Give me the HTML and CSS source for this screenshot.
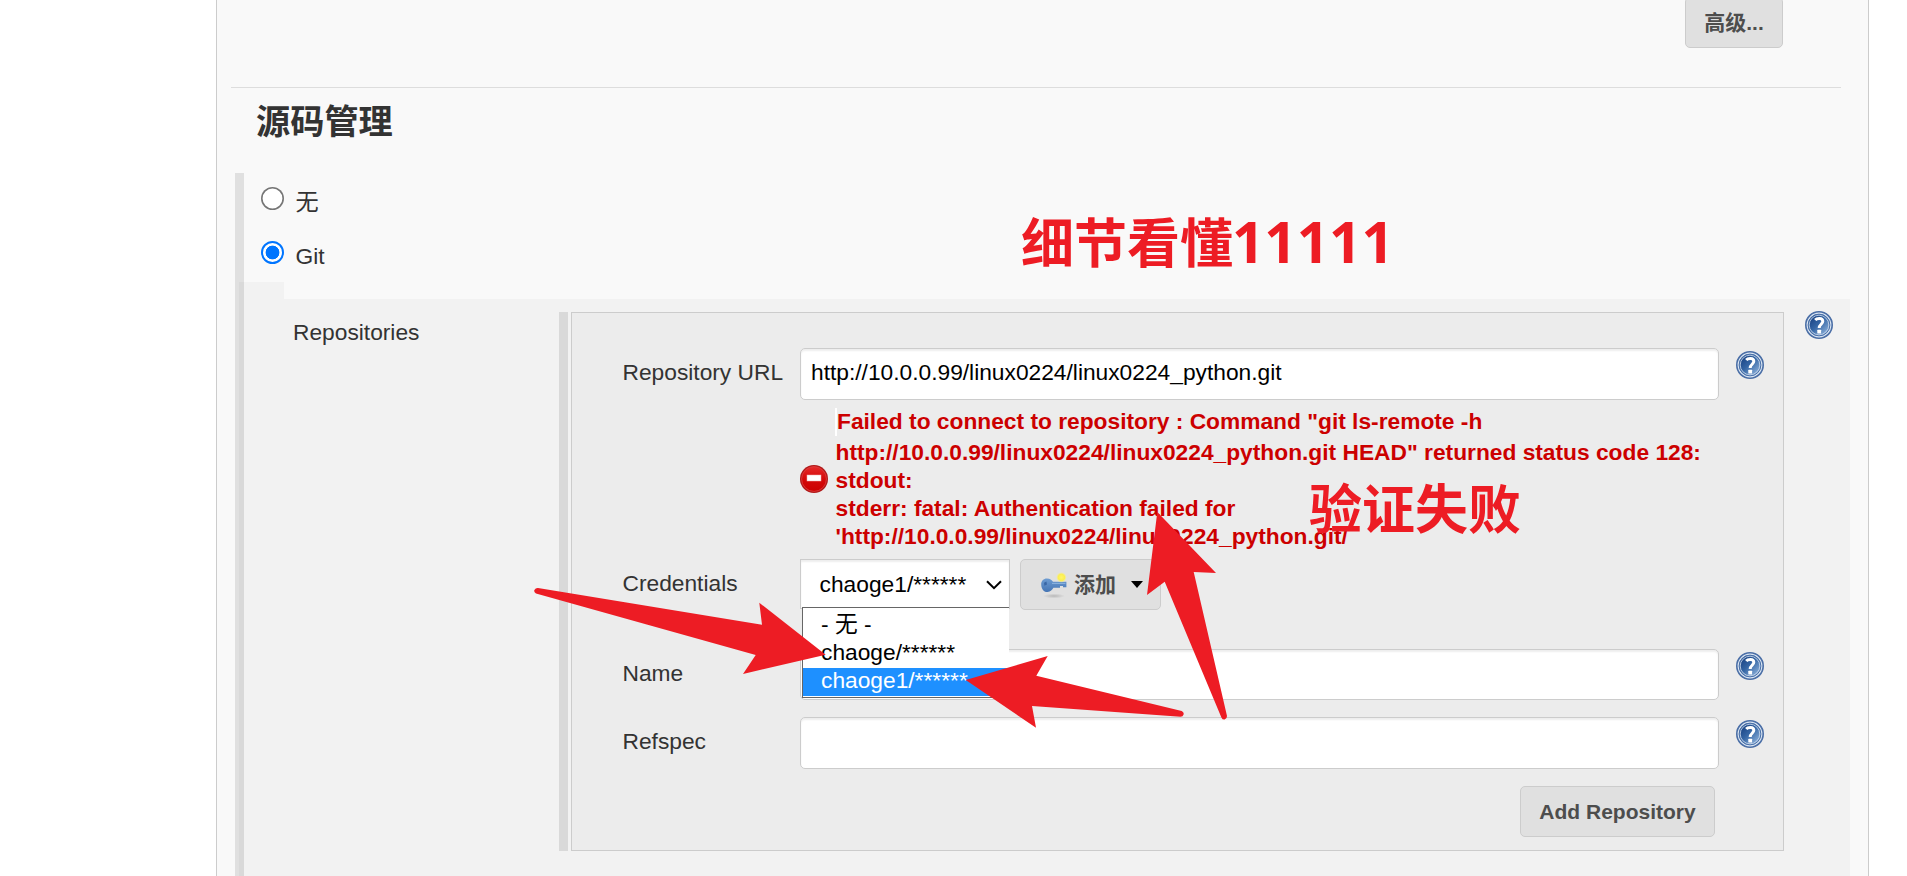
FILE: index.html
```html
<!DOCTYPE html>
<html lang="zh-CN">
<head>
<meta charset="utf-8">
<title>源码管理</title>
<link rel="stylesheet" href="styles.css">
</head>
<body>
<svg class="defs" width="0" height="0" aria-hidden="true">
  <defs>
    <linearGradient id="blue" x1="0.1" y1="0.1" x2="0.9" y2="0.9">
      <stop offset="0" stop-color="#163f80"/>
      <stop offset="0.45" stop-color="#3465a4"/>
      <stop offset="1" stop-color="#8fb3dc"/>
    </linearGradient>
    <linearGradient id="red" x1="0" y1="0" x2="0" y2="1">
      <stop offset="0" stop-color="#e62a2a"/>
      <stop offset="0.5" stop-color="#d40a0a"/>
      <stop offset="1" stop-color="#cc0000"/>
    </linearGradient>
    <radialGradient id="spark">
      <stop offset="0" stop-color="#fff56a"/>
      <stop offset="0.6" stop-color="#fbee50"/>
      <stop offset="1" stop-color="#fbf08a" stop-opacity="0"/>
    </radialGradient>
    <linearGradient id="steel" x1="0" y1="0" x2="0" y2="1">
      <stop offset="0" stop-color="#6d9cd2"/>
      <stop offset="1" stop-color="#4575b4"/>
    </linearGradient>
    <radialGradient id="ground">
      <stop offset="0" stop-color="#b8b8b8"/>
      <stop offset="1" stop-color="#e0e0e0"/>
    </radialGradient>
    <symbol id="help" viewBox="0 0 28 28">
      <circle cx="14" cy="14" r="13.2" fill="#dbe6f3" stroke="#4a6ea6" stroke-width="1.6"/>
      <circle cx="14" cy="14" r="10.9" fill="url(#blue)" stroke="#4a70a8" stroke-width="1"/>
      <circle cx="14" cy="14" r="9.8" fill="none" stroke="#c3d3e8" stroke-width="0.9"/>
      <path d="M10.2 8.9C11.6 7.3 17.8 6.2 17.8 10.3C17.8 13.2 14.2 13.4 14.2 17" fill="none" stroke="#fff" stroke-width="3"/>
      <rect x="12.3" y="18.8" width="3.8" height="3.6" rx="0.5" fill="#fff"/>
    </symbol>
  </defs>
</svg>

<main class="panel">
  <div class="advanced"><button class="btn btn-advanced"><span class="btn-cjk">高级...</span></button></div>
  <hr class="rule">
  <h2 class="heading">源码管理</h2>

  <section class="scm">
    <div class="bar"></div>
    <div class="scm-body">
      <label class="choice"><span class="radio"></span><span class="choice-none">无</span></label>
      <label class="choice"><span class="radio radio-on"></span><span>Git</span></label>
      <div class="shade-step"></div>
      <div class="git">
        <div class="repo-label">Repositories</div>
        <div class="bar bar-inner"></div>
        <div class="repo">
          <div class="row row-url">
            <span class="label">Repository URL</span>
            <div class="input">http://10.0.0.99/linux0224/linux0224_python.git</div>
            <svg class="help"><use href="#help"/></svg>
          </div>
          <div class="error">
            <svg class="error-icon" viewBox="0 0 28 28">
              <circle cx="14" cy="14" r="14" fill="#b01818"/>
              <circle cx="14" cy="14" r="12.4" fill="url(#red)" stroke="#e04040" stroke-width="0.8"/>
              <rect x="7" y="10" width="14" height="6" fill="#fff" stroke="#f2b0b0" stroke-width="0.5"/>
            </svg>
            <div class="error-text">
              <div class="error-first">Failed to connect to repository : Command "git ls-remote -h</div>
              <div>http://10.0.0.99/linux0224/linux0224_python.git HEAD" returned status code 128:</div>
              <div>stdout:</div>
              <div>stderr: fatal: Authentication failed for</div>
              <div>'http://10.0.0.99/linux0224/linux0224_python.git/</div>
            </div>
          </div>
          <div class="row row-cred">
            <span class="label">Credentials</span>
            <div class="cred">
              <div class="select">
                <span>chaoge1/******</span>
                <svg class="chevron" viewBox="0 0 16 10"><path d="M1 1.2L8 8.2L15 1.2" fill="none" stroke="#000" stroke-width="2"/></svg>
                <ul class="options">
                  <li class="opt opt-none">- 无 -</li>
                  <li class="opt">chaoge/******</li>
                  <li class="opt opt-on">chaoge1/******</li>
                </ul>
              </div>
              <button class="btn btn-add">
                <svg class="key" viewBox="0 0 28 28">
                  <ellipse cx="14" cy="25" rx="11" ry="2.4" fill="url(#ground)"/>
                  <path d="M1.2 13.2C1.2 9.6 4 7.2 7 7.4C10 7.4 11.8 8.8 13 10.8H26.4V16.2H23V15H20V16.8H13.4C12.2 19 10.6 20.8 7.6 21C3.6 21.2 1.2 17.4 1.2 13.2Z" fill="url(#steel)"/>
                  <path d="M4 11.8L6.4 10.4L7 13.4L4.4 14.8Z" fill="#3a67a5"/>
                  <path d="M12 12.4H25.4" stroke="#8db4e0" stroke-width="1"/>
                  <circle cx="21.4" cy="6.4" r="5.4" fill="url(#spark)"/>
                </svg>
                <span class="btn-cjk">添加</span>
                <span class="caret"></span>
              </button>
            </div>
          </div>
          <div class="row row-name">
            <span class="label">Name</span>
            <div class="input input-name"></div>
            <svg class="help"><use href="#help"/></svg>
          </div>
          <div class="row row-ref">
            <span class="label">Refspec</span>
            <div class="input"></div>
            <svg class="help"><use href="#help"/></svg>
          </div>
          <div class="actions"><button class="btn btn-repo">Add Repository</button></div>
        </div>
        <svg class="help help-outer"><use href="#help"/></svg>
      </div>
    </div>
  </section>
</main>

<div class="note note-top">细节看懂<span class="digits">11111</span></div>
<div class="note note-fail">验证失败</div>
<svg class="arrows" viewBox="0 0 1907 876">
  <path d="M538 588L762 624.7L759.3 602.7L825.7 654.7L743 674L755.7 655L536 593.6Q533.6 592 534.4 590Q535.6 587.8 538 588Z"/>
  <path d="M965.7 680L1047.7 656L1036.3 675.7L1181.7 711Q1184 712 1183.7 714.3Q1183 716.8 1180.5 716.8L1032 706L1036 727.7Z"/>
  <path d="M1157.3 512L1216 573L1193.7 572L1227 716Q1227 719 1224.6 719.6Q1222.4 719.8 1221.4 717.4L1164.7 581.7L1147 595Z"/>
</svg>
</body>
</html>
```
FILE: styles.css
```css
* { box-sizing: border-box; }

body {
  margin: 0;
  height: 876px;
  overflow: hidden;
  position: relative;
  background: #fff;
  color: #333;
  font: 22.75px "Liberation Sans", Arial, "Noto Sans CJK SC", sans-serif;
}

.defs { position: absolute; }

.panel {
  width: 1653px;
  height: 876px;
  margin-left: 216px;
  overflow: hidden;
  background: #f9f9f9;
  border: solid #ccc;
  border-width: 0 1px;
}

.btn {
  display: flex;
  align-items: center;
  justify-content: center;
  height: 51px;
  padding: 0;
  background: #e0e0e0;
  border: 1px solid #ccc;
  border-radius: 5px;
  color: #4d4d4d;
  font: bold 21px "Liberation Sans", Arial, "Noto Sans CJK SC", sans-serif;
}
.btn-cjk { padding-bottom: 3px; }

.advanced {
  display: flex;
  justify-content: flex-end;
  height: 87px;
  padding-right: 85px;
}
.btn-advanced { width: 98px; margin-top: -3px; }

.rule {
  height: 1px;
  margin: 0 27px 0 14px;
  border: 0;
  background: #ddd;
}

.heading {
  height: 85px;
  margin: 0;
  padding-left: 39px;
  font-size: 34.2px;
  line-height: 69px;
}

.scm { display: flex; margin: 0 18px; height: 703px; }
.bar { width: 9px; background: #e0e0e0; }
.scm-body { width: 1606px; }

.choice {
  display: flex;
  align-items: center;
  height: 54px;
  padding-left: 17px;
  gap: 11.5px;
  line-height: 54px;
}
.choice > span:last-child { padding-top: 3px; }
.choice > .choice-none { padding-top: 5px; font-size: 23.2px; }

.radio {
  width: 23px;
  height: 23px;
  margin-top: -3px;
  border-radius: 50%;
  background: #fff;
  box-shadow: inset 0 0 0 1.6px #767676;
}
.radio-on {
  border: 2px solid #0075ff;
  background: radial-gradient(circle, #0075ff 6.6px, #fff 7.2px);
  box-shadow: none;
}

.shade-step {
  width: 45px;
  height: 17px;
  margin: 1px 0 0 -5px;
  background: rgba(0, 0, 0, 0.028);
}

.git {
  display: flex;
  height: 577px;
  width: 1611px;
  margin-left: -5px;
  background: rgba(0, 0, 0, 0.028);
}

.repo-label {
  width: 320px;
  padding: 9px 0 0 54px;
  line-height: 48px;
}
.bar-inner { height: 539px; margin: 13px 3px 0 0; background: #d9d9d9; }

.repo {
  width: 1213px;
  height: 539px;
  margin-top: 13px;
  padding: 35px 0 0 50px;
  border: 1px solid #ccc;
  background: #ececec;
}

.row {
  display: grid;
  grid-template-columns: 178px 919px 28px;
  height: 52px;
}
.row .help { margin-left: 17px; margin-top: 3px; }
.label { padding-left: 0.5px; line-height: 48px; white-space: nowrap; }
.help { width: 28px; height: 28px; }
.help-outer { margin: 12px 0 0 21px; }

.input {
  height: 52px;
  padding-left: 10px;
  border: 1px solid #ccc;
  border-radius: 5px;
  background: #fff;
  box-shadow: inset 0 2px 2px rgba(0, 0, 0, 0.07);
  color: #000;
  line-height: 47px;
}
.input-name { height: 51px; }

.error {
  display: flex;
  align-items: center;
  gap: 7.5px;
  height: 142px;
  margin: 8px 0 9px 178px;
}
.error-icon { width: 28px; height: 28px; }
.error-text {
  color: #c00;
  font-weight: bold;
  line-height: 28px;
  white-space: nowrap;
}
.error-first {
  margin-bottom: 2px;
  border-left: 2px solid #fff;
  line-height: 26px;
  padding-bottom: 2px;
  margin-left: -0.5px;
}

.row-cred { height: 90px; }
.cred { display: flex; gap: 10px; }
.select {
  position: relative;
  display: flex;
  justify-content: space-between;
  width: 210px;
  height: 50px;
  padding: 0 7px 0 18.6px;
  border: 1px solid #ccc;
  background: #fff;
  box-shadow: inset 0 2px 2px rgba(0, 0, 0, 0.07);
  color: #000;
  line-height: 49px;
}
.chevron { width: 16px; height: 10px; margin-top: 20px; }

.options {
  position: absolute;
  z-index: 1;
  top: 47px;
  left: 1px;
  width: 207px;
  height: 91px;
  margin: 0;
  padding: 0;
  list-style: none;
  background: #fff;
  border: solid #666;
  border-width: 1px 0 1px 1px;
}
.opt { height: 28px; padding-left: 18px; line-height: 24px; }
.opt-none { height: 32px; line-height: 32px; }
.opt-on { background: #1e90ff; color: #fff; line-height: 25px; }

.btn-add { width: 141px; padding-left: 2px; }
.key { width: 28px; height: 28px; margin-right: 6px; }
.caret {
  margin-left: 15px;
  border: solid transparent;
  border-width: 7px 6.5px 0;
  border-top-color: #000;
}

.row-name { height: 68px; }
.actions {
  display: flex;
  justify-content: flex-end;
  padding: 17px 68px 0 0;
}
.btn-repo { width: 195px; }

.note {
  position: absolute;
  color: #ed1c24;
  font: bold 53px/60px "Noto Sans CJK SC", sans-serif;
  white-space: nowrap;
}
.note-top { left: 1021px; top: 210px; }
.note-fail { left: 1309px; top: 476px; }
.digits { margin-left: -1px; font-family: "Open Sans", sans-serif; font-size: 56.6px; }

.arrows {
  position: absolute;
  z-index: 2;
  left: 0;
  top: 0;
  width: 1907px;
  height: 876px;
  fill: #ed1c24;
}
```
